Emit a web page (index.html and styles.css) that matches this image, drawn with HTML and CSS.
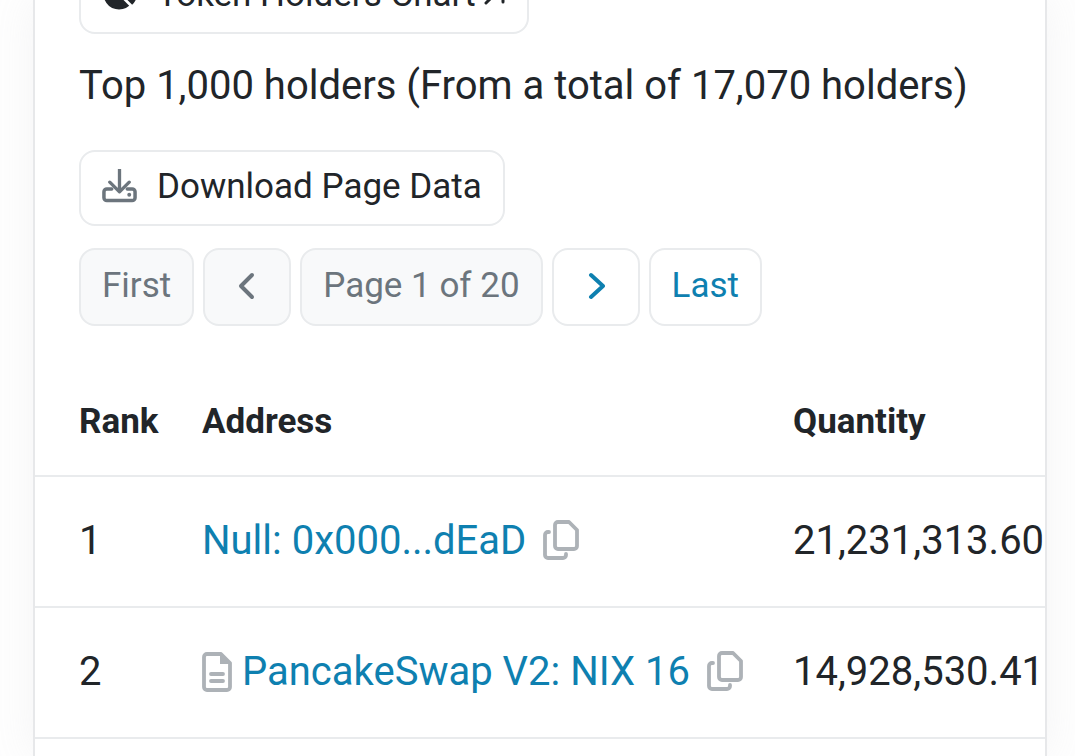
FILE: index.html
```html
<!DOCTYPE html>
<html lang="en">
<head>
    <meta charset="UTF-8">
    <meta name="viewport" content="width=device-width, initial-scale=1.0">
    <title>Token Holders</title>
    <link rel="stylesheet" href="styles.css">
</head>
<body>
    <!-- Shared icons -->
    <svg class="sprite" aria-hidden="true">
        <symbol id="copy" viewBox="0 0 36 40">
            <path d="M15 2h11l8 8v16a3 3 0 0 1-3 3H15a3 3 0 0 1-3-3V5a3 3 0 0 1 3-3z M6 12H5a3 3 0 0 0-3 3v20a3 3 0 0 0 3 3h15a3 3 0 0 0 3-3v-1" fill="none" stroke="currentColor" stroke-width="3.8" stroke-linecap="round" stroke-linejoin="round"/>
        </symbol>
    </svg>

    <main class="card">
        <div class="toolbar">
            <button class="btn btn-chart" type="button">
                <svg class="icon" viewBox="0 0 36 36" aria-hidden="true">
                    <path d="M16 1a16 16 0 1 0 12 28L16 17z M20 0v16h16A16 16 0 0 0 20 0z M22 19l9 9a16 16 0 0 0 5-9z" fill="currentColor"/>
                </svg>
                Token Holders Chart
                <svg class="icon-arrow" viewBox="0 0 24 24" aria-hidden="true">
                    <path d="M4 20L20 4M7 4h14v15" fill="none" stroke="currentColor" stroke-width="3" stroke-linecap="round"/>
                </svg>
            </button>
            <p class="summary">Top 1,000 holders (From a total of 17,070 holders)</p>
            <button class="btn" type="button">
                <svg class="icon icon-muted" viewBox="0 0 36 36" aria-hidden="true">
                    <path d="M10 20H5a3 3 0 0 0-3 3v6a3 3 0 0 0 3 3h26a3 3 0 0 0 3-3v-6a3 3 0 0 0-3-3h-5" fill="none" stroke="currentColor" stroke-width="3.6" stroke-linecap="round"/>
                    <path d="M18 0v23M8 13l10 10 10-10" fill="none" stroke="currentColor" stroke-width="3.4" stroke-linecap="round" stroke-linejoin="round"/>
                    <circle cx="28" cy="26" r="2" fill="currentColor"/>
                </svg>
                Download Page Data
            </button>
            <nav class="pagination" aria-label="Pages">
                <button class="page" type="button" disabled>First</button>
                <button class="page page-arrow" type="button" aria-label="Previous" disabled>
                    <svg class="chevron" viewBox="0 0 18 28" aria-hidden="true">
                        <path d="M14 3L3 14l11 11" fill="none" stroke="currentColor" stroke-width="4" stroke-linecap="round" stroke-linejoin="round"/>
                    </svg>
                </button>
                <span class="page page-current">Page 1 of 20</span>
                <a class="page page-arrow" href="#" aria-label="Next">
                    <svg class="chevron" viewBox="0 0 18 28" aria-hidden="true">
                        <path d="M4 3l12 11L4 25" fill="none" stroke="currentColor" stroke-width="4" stroke-linecap="round" stroke-linejoin="round"/>
                    </svg>
                </a>
                <a class="page" href="#">Last</a>
            </nav>
        </div>

        <div class="table-wrap">
            <table class="holders">
                <thead>
                    <tr>
                        <th class="col-rank">Rank</th>
                        <th class="col-address">Address</th>
                        <th>Quantity</th>
                    </tr>
                </thead>
                <tbody>
                    <tr>
                        <td>1</td>
                        <td>
                            <div class="address">
                                <a href="#">Null: 0x000...dEaD</a>
                                <button class="copy" type="button" aria-label="Copy address"><svg class="icon-copy"><use href="#copy"/></svg></button>
                            </div>
                        </td>
                        <td>21,231,313.603</td>
                    </tr>
                    <tr>
                        <td>2</td>
                        <td>
                            <div class="address">
                                <svg class="icon-file" viewBox="0 0 30 40" aria-hidden="true">
                                    <path d="M5 2h14l9 9v24a3 3 0 0 1-3 3H5a3 3 0 0 1-3-3V5a3 3 0 0 1 3-3z M9 22h12M9 29h12" fill="none" stroke="currentColor" stroke-width="3.8" stroke-linecap="round" stroke-linejoin="round"/>
                                    <path d="M18 2v10h11z" fill="currentColor"/>
                                </svg>
                                <a href="#">PancakeSwap V2: NIX 16</a>
                                <button class="copy" type="button" aria-label="Copy address"><svg class="icon-copy"><use href="#copy"/></svg></button>
                            </div>
                        </td>
                        <td>14,928,530.413</td>
                    </tr>
                    <tr>
                        <td></td>
                        <td></td>
                        <td></td>
                    </tr>
                </tbody>
            </table>
        </div>
    </main>
</body>
</html>
```
FILE: styles.css
```css
* {
    box-sizing: border-box;
}

body {
    height: 100vh;
    margin: 0;
    padding: 0 28px 0 33px;
    overflow: hidden;
    background: #fefefe;
    color: #212529;
    font-family: Roboto, Arial, sans-serif;
    font-size: 40px;
    line-height: 48px;
}

a {
    color: #0e80b0;
    text-decoration: none;
}

.sprite {
    display: none;
}

.card {
    height: 100vh;
    overflow: hidden;
    background: #fff;
    border: solid #e7e8ea;
    border-width: 0 2px;
    box-shadow: 0 0 40px rgba(189, 189, 194, 0.15);
}

.toolbar {
    display: flex;
    flex-direction: column;
    align-items: flex-start;
    margin-top: -44px;
    padding: 0 44px;
}

.btn,
.page {
    display: flex;
    align-items: center;
    padding: 15px 21px 17px;
    border: 2px solid #e9ebed;
    border-radius: 16px;
    background: #fff;
    color: #212529;
    font-family: inherit;
    font-size: 35px;
    line-height: 42px;
    white-space: nowrap;
}

.btn {
    gap: 20px;
    padding-top: 14px;
    padding-bottom: 16px;
}

.btn-chart {
    padding-top: 16px;
}

.summary {
    margin: 28px 0 40px;
}

.icon {
    width: 35px;
    height: 36px;
}

.icon-arrow {
    width: 24px;
    height: 24px;
    margin-left: -14px;
}

.icon-muted {
    color: #6c757d;
}

.pagination {
    display: flex;
    gap: 9px;
    margin-top: 22px;
}

.page {
    color: #0e80b0;
}

.page:disabled,
.page-current {
    background: #f8f9fa;
    color: #6c757d;
}

.page-arrow {
    justify-content: center;
    width: 88px;
}

.chevron {
    width: 18px;
    height: 28px;
}

.table-wrap {
    margin-top: 40px;
    overflow: hidden;
}

.holders {
    width: 100%;
    table-layout: fixed;
    border-collapse: collapse;
    white-space: nowrap;
}

.holders th,
.holders td {
    height: 131px;
    padding: 0 0 2px;
    border-bottom: 2px solid #e9ebed;
    text-align: left;
}

.holders th {
    height: 110px;
    padding: 2px 0 0;
    font-size: 35px;
    font-weight: bold;
}

.holders th:first-child,
.holders td:first-child {
    padding-left: 44px;
}

.col-rank {
    width: 167px;
}

.col-address {
    width: 591px;
}

.address {
    display: flex;
    align-items: center;
}

.copy {
    display: flex;
    margin-left: 17px;
    padding: 0 0 2px;
    border: 0;
    background: none;
    color: #adb2b7;
}

.icon-copy {
    width: 36px;
    height: 40px;
}

.icon-file {
    width: 30px;
    height: 40px;
    margin-right: 10px;
    color: #adb2b7;
}
```
